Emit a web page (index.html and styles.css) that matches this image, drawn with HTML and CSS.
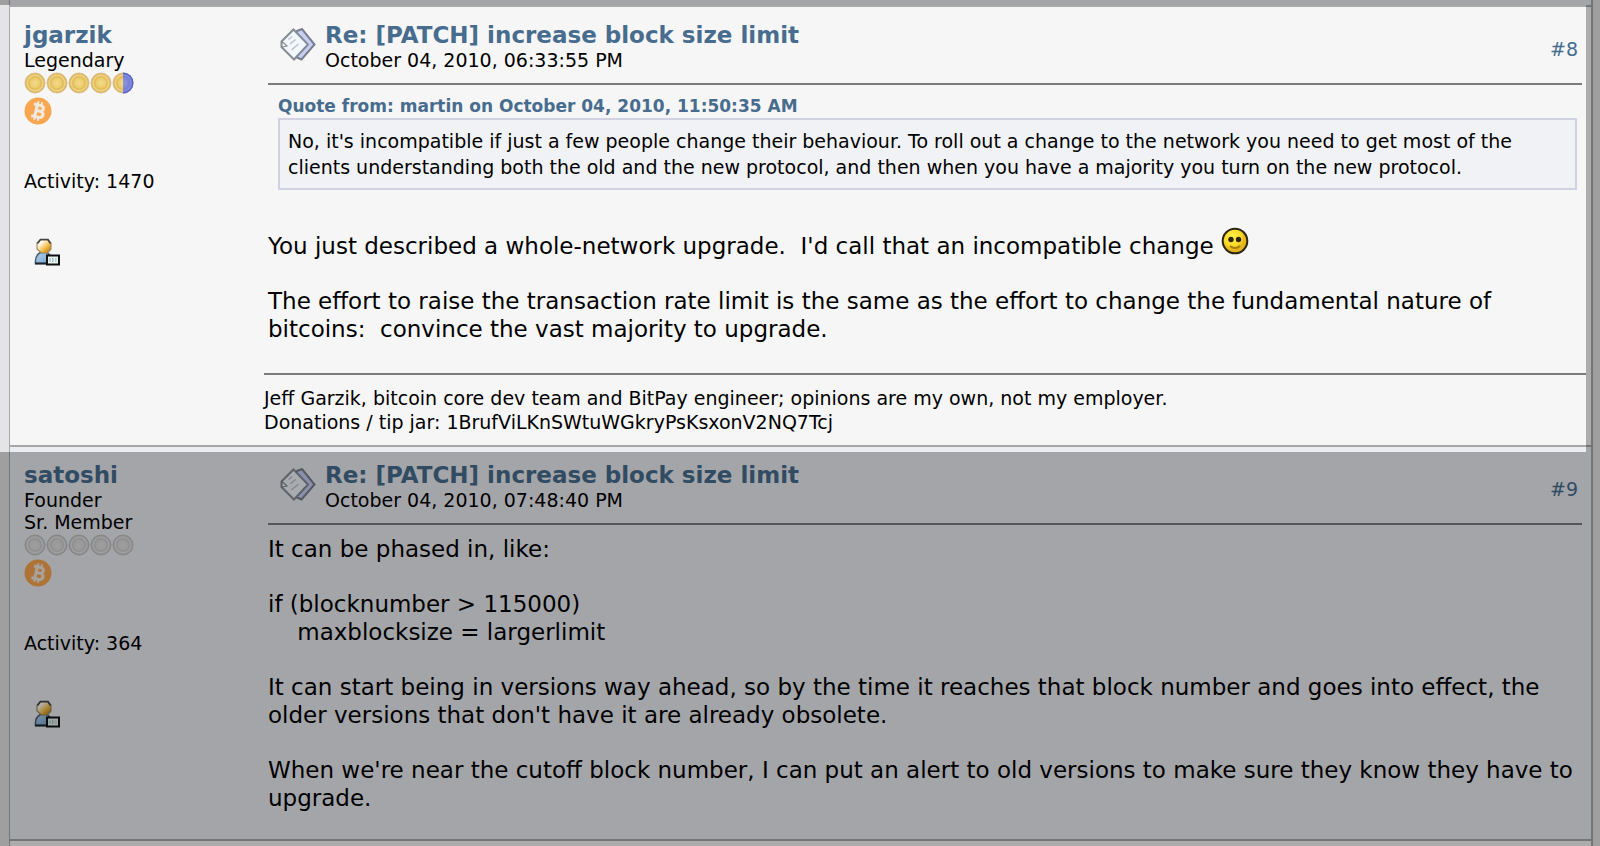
FILE: index.html
```
<!DOCTYPE html>
<html lang="en">
<head>
<meta charset="utf-8">
<meta name="viewport" content="width=device-width, initial-scale=1">
<title>Re: [PATCH] increase block size limit</title>
<link rel="stylesheet" href="styles.css">
</head>
<body>
<svg class="defs" aria-hidden="true">
  <defs>
    <radialGradient id="gold"><stop offset="0" stop-color="#f3da92"/><stop offset=".5" stop-color="#eccb68"/><stop offset=".62" stop-color="#dcb85c"/><stop offset=".78" stop-color="#f2d880"/><stop offset="1" stop-color="#c99d48"/></radialGradient>
    <radialGradient id="silver"><stop offset="0" stop-color="#e4e4e4"/><stop offset=".5" stop-color="#dadada"/><stop offset=".62" stop-color="#cacaca"/><stop offset=".78" stop-color="#e6e6e6"/><stop offset="1" stop-color="#b8b8b8"/></radialGradient>
    <radialGradient id="blue" gradientUnits="userSpaceOnUse" cx="11" cy="11" r="10.500"><stop offset="0" stop-color="#8e97de"/><stop offset=".5" stop-color="#8089d9"/><stop offset=".62" stop-color="#747dd4"/><stop offset=".78" stop-color="#868fdc"/><stop offset="1" stop-color="#3f4ac6"/></radialGradient>
    <radialGradient id="face" cx=".4" cy=".35"><stop offset="0" stop-color="#fff04a"/><stop offset=".7" stop-color="#fbd928"/><stop offset="1" stop-color="#e3b41c"/></radialGradient>
    <linearGradient id="head" x2="1" y2="1"><stop offset=".25" stop-color="#fffaf0"/><stop offset=".6" stop-color="#f3bd45"/><stop offset="1" stop-color="#a86c08"/></linearGradient>
    <linearGradient id="torso" x2="1" y2="1"><stop offset="0" stop-color="#b4d4ee"/><stop offset="1" stop-color="#6c9dca"/></linearGradient>
    <symbol id="coin-gold" viewBox="0 0 22 22"><circle cx="11" cy="11" r="10" fill="url(#gold)" stroke="#d9bf8c"/></symbol>
    <symbol id="coin-silver" viewBox="0 0 22 22"><circle cx="11" cy="11" r="10" fill="url(#silver)" stroke="#c0c0c0"/></symbol>
    <symbol id="coin-half" viewBox="0 0 22 22"><circle cx="11" cy="11" r="10" fill="url(#gold)" stroke="#d9bf8c"/><path d="M11 .5a10.500 10.500 0 0 1 0 21z" fill="url(#blue)"/></symbol>
    <symbol id="btc" viewBox="0 0 28 28"><circle cx="14" cy="14" r="13.500" fill="#f9a650"/><g transform="rotate(13 14 14)" fill="none" stroke="#f0e9df" stroke-width="3"><path d="M8.500 8h6.500c5 0 5 5.800 0 5.800h-3.500M12 8v12M8.500 20h7c5.600 0 5.600-6.200 0-6.200"/><path d="M12.300 4.500v3M16 4.500v3M12.300 20.500v3M16 20.500v3" stroke-width="2"/></g></symbol>
    <symbol id="pages" viewBox="0 0 36 34"><path d="M17 3l5-2 12.500 15.500L21.500 31.500 16 29z" fill="#c7cff5" stroke="#7a7e8a" stroke-width="2"/><path d="M13.500 1.500L28 16.500 14 31.500 1.500 19v-5.500z" fill="#f2f7fb" stroke="#868c96" stroke-width="2"/><path d="M2 13.500l5 4.500-5 1z" fill="#fff" stroke="#868c96" stroke-width="1.200"/><path d="M8.500 11.500l3.500-3M10 16l5.500-4.500M11.500 22l7-6" stroke="#bcc0d2" stroke-width="1.500"/></symbol>
    <symbol id="user" viewBox="0 0 26 28"><path d="M1.500 25.500c-.5-5 1-9 5-11h6c4 2 6 6 5.500 11z" fill="url(#torso)" stroke="#4a5c6b" stroke-width="1.500"/><path d="M1 25.500h13" stroke="#1b2630" stroke-width="2"/><path d="M6 2h8l3 3v6l-3.500 4h-6L3 11V5z" fill="url(#head)" stroke="#9c8b68" stroke-width="1.200"/><path d="M3.500 5.500l3-4H14l2.500 4" fill="none" stroke="#444" stroke-width="1.700"/><rect x="13" y="17.500" width="12" height="9" fill="#e5f3f1" stroke="#111" stroke-width="2"/><path d="M16 20.500v3M18 20.500h1v3h-1M21 21h1.500M21 23h1.500" fill="none" stroke="#8fb0b0"/></symbol>
    <symbol id="smile" viewBox="0 0 28 28"><circle cx="14" cy="14" r="12.300" fill="url(#face)" stroke="#2b260c" stroke-width="2"/><circle cx="10" cy="12.500" r="2.700" fill="#2d2500"/><circle cx="17.500" cy="12.500" r="2.700" fill="#2d2500"/><path d="M9 19c3 2.500 7 2.500 10 0" fill="none" stroke="#a57d06" stroke-width="2"/></symbol>
  </defs>
</svg>
<main class="thread">
  <article class="post post-light">
    <aside class="poster">
      <a class="poster-name" href="#jgarzik">jgarzik</a>
      <span>Legendary</span>
      <div class="coins">
        <svg><use href="#coin-gold"/></svg><svg><use href="#coin-gold"/></svg><svg><use href="#coin-gold"/></svg><svg><use href="#coin-gold"/></svg><svg><use href="#coin-half"/></svg>
      </div>
      <svg class="badge"><use href="#btc"/></svg>
      <span class="activity">Activity: 1470</span>
      <a class="profile" href="#profile8" aria-label="View profile"><svg><use href="#user"/></svg></a>
    </aside>
    <div class="content">
      <header class="post-head">
        <svg class="pages"><use href="#pages"/></svg>
        <div class="heading">
          <a class="subject" href="#msg8">Re: [PATCH] increase block size limit</a>
          <span>October 04, 2010, 06:33:55 PM</span>
        </div>
        <a class="number" href="#msg8">#8</a>
      </header>
      <div class="quote">
        <a class="quote-head" href="#quoted">Quote from: martin on October 04, 2010, 11:50:35 AM</a>
        <blockquote>No, it's incompatible if just a few people change their behaviour. To roll out a change to the network you need to get most of the clients understanding both the old and the new protocol, and then when you have a majority you turn on the new protocol.</blockquote>
      </div>
      <div class="message">
        <p>You just described a whole-network upgrade.&nbsp; I'd call that an incompatible change <svg class="smile" role="img" aria-label="Smiley"><use href="#smile"/></svg></p>
        <p>The effort to raise the transaction rate limit is the same as the effort to change the fundamental nature of bitcoins:&nbsp; convince the vast majority to upgrade.</p>
      </div>
      <footer class="signature">Jeff Garzik, bitcoin core dev team and BitPay engineer; opinions are my own, not my employer.<br>Donations / tip jar: 1BrufViLKnSWtuWGkryPsKsxonV2NQ7Tcj</footer>
    </div>
    <div class="spotlight"></div>
  </article>
  <article class="post post-tint">
    <aside class="poster">
      <a class="poster-name" href="#satoshi">satoshi</a>
      <span>Founder</span>
      <span>Sr. Member</span>
      <div class="coins">
        <svg><use href="#coin-silver"/></svg><svg><use href="#coin-silver"/></svg><svg><use href="#coin-silver"/></svg><svg><use href="#coin-silver"/></svg><svg><use href="#coin-silver"/></svg>
      </div>
      <svg class="badge"><use href="#btc"/></svg>
      <span class="activity">Activity: 364</span>
      <a class="profile" href="#profile9" aria-label="View profile"><svg><use href="#user"/></svg></a>
    </aside>
    <div class="content">
      <header class="post-head">
        <svg class="pages"><use href="#pages"/></svg>
        <div class="heading">
          <a class="subject" href="#msg9">Re: [PATCH] increase block size limit</a>
          <span>October 04, 2010, 07:48:40 PM</span>
        </div>
        <a class="number" href="#msg9">#9</a>
      </header>
      <div class="message">
        <p>It can be phased in, like:</p>
        <p>if (blocknumber &gt; 115000)<br>&nbsp;&nbsp;&nbsp; maxblocksize = largerlimit</p>
        <p>It can start being in versions way ahead, so by the time it reaches that block number and goes into effect, the older versions that don't have it are already obsolete.</p>
        <p>When we're near the cutoff block number, I can put an alert to old versions to make sure they know they have to upgrade.</p>
      </div>
    </div>
  </article>
</main>
</body>
</html>
```
FILE: styles.css
```
* { box-sizing: border-box; }
html { overflow: hidden; }
body {
  margin: 0;
  background: #e4e4e6;
  color: #000;
  font: 19px/22px Verdana, "DejaVu Sans", sans-serif;
}
a { color: #476c8e; text-decoration: none; }
svg { display: block; }
.defs { position: absolute; width: 0; height: 0; }

.thread {
  min-height: 100vh;
  margin: 0 7px 0 9px;
  padding-top: 5px;
  border: solid #a8a8aa;
  border-width: 0 2px 0 1px;
  background: linear-gradient(#ebedf2 5px, #f6f6f6 5px);
}
.post {
  position: relative;
  display: grid;
  grid-template-columns: 240px minmax(0, 1fr);
  padding: 0 5px 0 14px;
  border-top: 2px solid #a8a8a8;
}
.post-light { background: #f6f6f6; }
.post-tint { background: #ebedf2; border-bottom: 2px solid #a8a8a8; }

/* Dims everything around the highlighted post */
.spotlight {
  position: absolute;
  z-index: 1;
  inset: -2px 5px -7px -10px;
  box-shadow: 0 0 0 2000px rgba(0, 0, 0, .3);
  pointer-events: none;
}

.poster {
  display: flex;
  flex-direction: column;
  align-items: flex-start;
  padding-top: 15px;
}
.poster-name, .subject { font-size: 23px; line-height: 27px; font-weight: bold; }
.coins { display: flex; margin: 1px 0 3px; }
.coins svg { width: 22px; height: 22px; }
.badge { width: 28px; height: 28px; }
.activity { margin-top: 45px; }
.profile { margin: 46px 0 0 10px; }
.profile svg { width: 26px; height: 28px; }

.post-head {
  display: flex;
  align-items: center;
  margin: 0 4px;
  padding: 15px 4px 12px 12px;
  border-bottom: 2px solid #7b7b7b;
}
.pages { width: 36px; height: 34px; margin: 0 9px 3px 0; }
.heading { display: flex; flex-direction: column; flex: 1; }
.number { padding-top: 5px; }

.quote { margin: 10px 9px 0 14px; }
.quote-head { display: block; font-size: 17px; line-height: 23px; font-weight: bold; }
blockquote {
  margin: 0;
  padding: 8px;
  border: 2px solid #d0d2e2;
  background: #f0f2f5;
  line-height: 26px;
}
.message { padding: 10px 4px 0; font-size: 23px; line-height: 28px; }
.message p { margin: 0 0 27px; }
.quote + .message { padding-top: 42px; }
.smile { display: inline-block; width: 28px; height: 28px; margin: -8px 0 0; vertical-align: -1px; }
.signature {
  margin-top: 30px;
  padding: 11px 0;
  border-top: 2px solid #7b7b7b;
  line-height: 24px;
}
```
